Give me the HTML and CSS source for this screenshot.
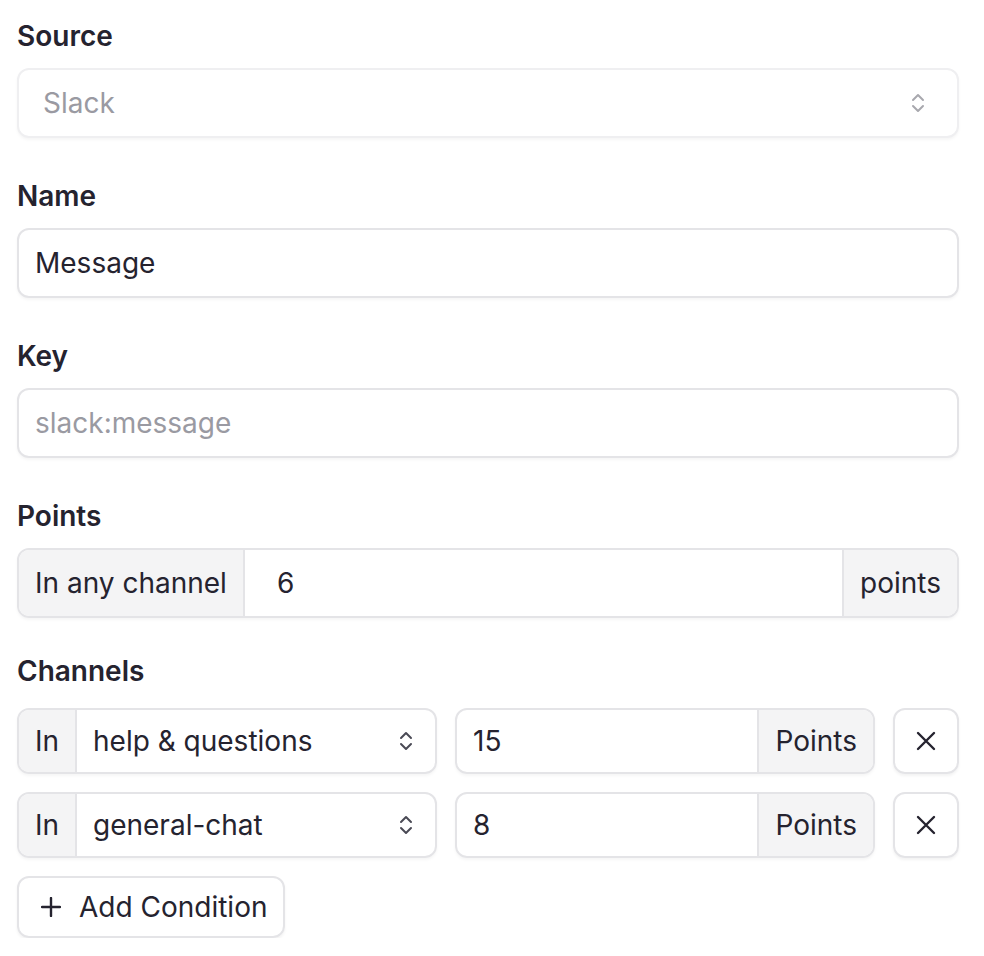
FILE: index.html
```html
<!DOCTYPE html>
<html lang="en">
<head>
<meta charset="utf-8">
<link rel="stylesheet" href="styles.css">
</head>
<body>
<div class="form">
  <div class="field">
    <div class="label">Source</div>
    <div class="control select disabled">
      <span class="value muted">Slack</span>
      <svg class="chev" viewBox="0 0 14 22" width="14" height="22"><path d="M2 8 L7 3 L12 8 M2 14 L7 19 L12 14" fill="none" stroke="currentColor" stroke-width="2" stroke-linecap="round" stroke-linejoin="round"/></svg>
    </div>
  </div>
  <div class="field">
    <div class="label">Name</div>
    <div class="control text"><span class="value">Message</span></div>
  </div>
  <div class="field">
    <div class="label">Key</div>
    <div class="control text"><span class="value muted">slack:message</span></div>
  </div>
  <div class="field">
    <div class="label">Points</div>
    <div class="group">
      <div class="addon">In any channel</div>
      <div class="grow pad-num">6</div>
      <div class="addon">points</div>
    </div>
  </div>
  <div class="field channels">
    <div class="label">Channels</div>
    <div class="rows">
      <div class="row">
        <div class="group half">
          <div class="addon small">In</div>
          <div class="grow sel">help &amp; questions
            <svg class="chev" viewBox="0 0 14 22" width="14" height="22"><path d="M2 8 L7 3 L12 8 M2 14 L7 19 L12 14" fill="none" stroke="currentColor" stroke-width="2" stroke-linecap="round" stroke-linejoin="round"/></svg>
          </div>
        </div>
        <div class="group half">
          <div class="grow">15</div>
          <div class="addon">Points</div>
        </div>
        <div class="iconbtn"><svg viewBox="0 0 20 20" width="20" height="20"><path d="M2 2 L18 18 M18 2 L2 18" stroke="currentColor" stroke-width="2.4" stroke-linecap="round"/></svg></div>
      </div>
      <div class="row">
        <div class="group half">
          <div class="addon small">In</div>
          <div class="grow sel">general-chat
            <svg class="chev" viewBox="0 0 14 22" width="14" height="22"><path d="M2 8 L7 3 L12 8 M2 14 L7 19 L12 14" fill="none" stroke="currentColor" stroke-width="2" stroke-linecap="round" stroke-linejoin="round"/></svg>
          </div>
        </div>
        <div class="group half">
          <div class="grow">8</div>
          <div class="addon">Points</div>
        </div>
        <div class="iconbtn"><svg viewBox="0 0 20 20" width="20" height="20"><path d="M2 2 L18 18 M18 2 L2 18" stroke="currentColor" stroke-width="2.4" stroke-linecap="round"/></svg></div>
      </div>
      <div class="addrow">
        <div class="btn"><svg viewBox="0 0 20 20" width="20" height="20"><path d="M10 1 V19 M1 10 H19" stroke="currentColor" stroke-width="2.4" stroke-linecap="round"/></svg><span>Add Condition</span></div>
      </div>
    </div>
  </div>
</div>
</body>
</html>
```
FILE: styles.css
```css
* { box-sizing: border-box; }
html, body { margin: 0; background: #fff; }
body {
  font-family: Inter, "Noto Sans", sans-serif;
  color: #25232f;
  font-size: 28px;
}
.form {
  padding: 16px 25px 0 17px;
  display: flex;
  flex-direction: column;
  gap: 38px;
}
.field { display: flex; flex-direction: column; gap: 12px; }
.label {
  font-weight: 600;
  font-size: 28px;
  line-height: 40px;
  color: #25232f;
}
.control {
  height: 70px;
  border: 2px solid #e4e4e7;
  border-radius: 12px;
  display: flex;
  align-items: center;
  padding: 0 16px;
  box-shadow: 0 2px 3px rgba(0,0,0,0.04);
  background: #fff;
}
.select.disabled { padding: 0 32px 0 24px; justify-content: space-between; border-color: #efeff1; }
.muted { color: #9a9aa2; }
.select .chev { color: #a8a8ae; }
.group {
  height: 70px;
  border: 2px solid #e4e4e7;
  border-radius: 12px;
  display: flex;
  overflow: hidden;
  box-shadow: 0 2px 3px rgba(0,0,0,0.04);
}
.addon {
  background: #f4f4f5;
  display: flex;
  align-items: center;
  padding: 0 16px;
  white-space: nowrap;
}
.group > .addon:first-child { border-right: 2px solid #e4e4e7; }
.group > .addon:last-child { border-left: 2px solid #e4e4e7; }
.grow { flex: 1; display: flex; align-items: center; padding: 0 16px; }
.pad-num { padding-left: 32px; }
.field.channels { gap: 17px; margin-top: -5px; }
.rows { display: flex; flex-direction: column; gap: 18px; }
.row { display: flex; gap: 18px; height: 66px; }
.row .group { height: 66px; }
.half { flex: 1; }
.addon.small { width: 58px; padding: 0 0 0 16px; }
.sel { justify-content: space-between; padding-right: 22px; }
.sel .chev { color: #4a4a55; }
.iconbtn {
  width: 66px;
  height: 66px;
  border: 2px solid #e4e4e7;
  border-radius: 12px;
  display: flex;
  align-items: center;
  justify-content: center;
  box-shadow: 0 2px 3px rgba(0,0,0,0.05);
  color: #25232f;
}
.addrow { display: flex; }
.btn {
  height: 62px;
  border: 2px solid #e4e4e7;
  border-radius: 12px;
  display: flex;
  align-items: center;
  gap: 18px;
  padding: 0 16px 0 22px;
  box-shadow: 0 2px 3px rgba(0,0,0,0.05);
}
```
